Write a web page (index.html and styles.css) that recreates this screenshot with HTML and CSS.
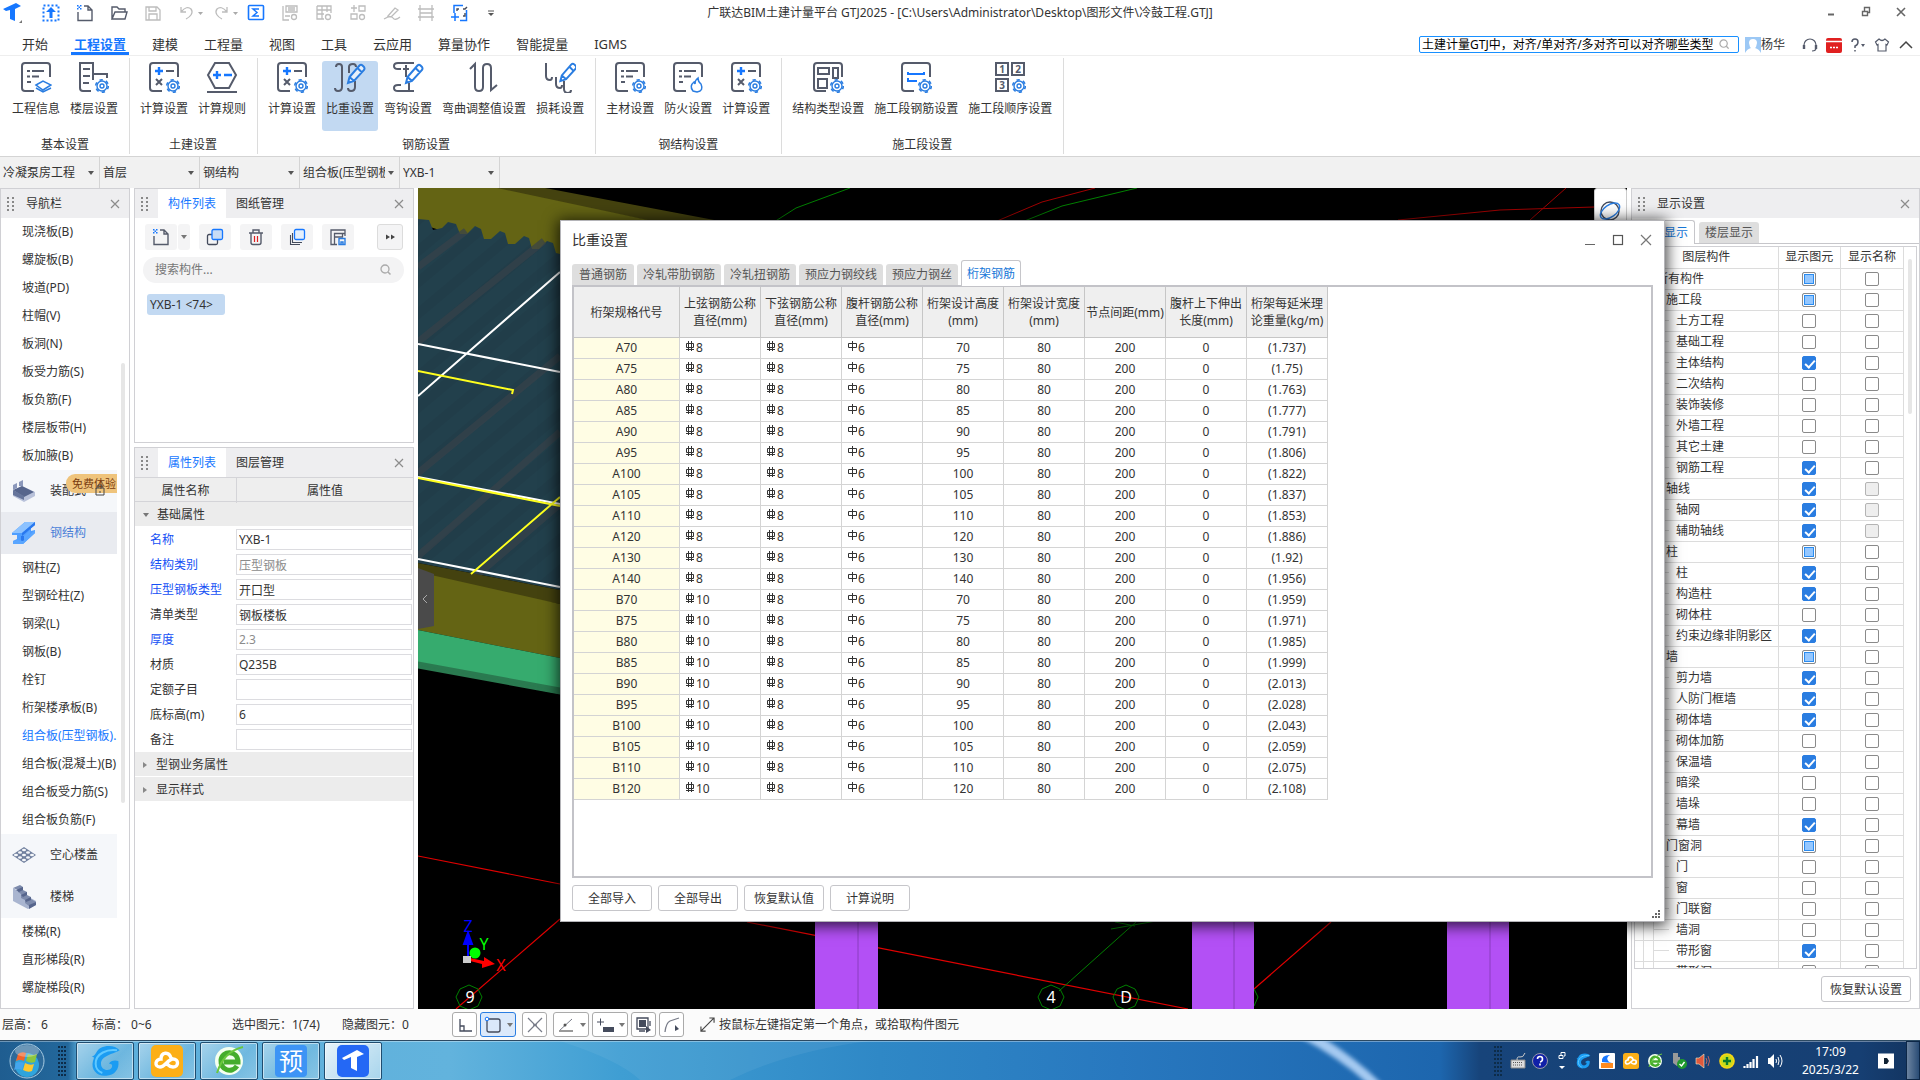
FILE: index.html
```html
<!DOCTYPE html>
<html lang="zh-CN">
<head>
<meta charset="utf-8">
<title>广联达BIM土建计量平台 GTJ2025</title>
<link rel="stylesheet" href="styles.css">
</head>
<body>
<svg class="defs" aria-hidden="true">
  <symbol id="gear" viewBox="0 0 16 16"><g fill="none" stroke="#2a7de1"><circle cx="8" cy="8" r="5" stroke-width="1.4"/><circle cx="8" cy="8" r="6.3" stroke-width="1.6" stroke-dasharray="3.3 3.3"/><circle cx="8" cy="8" r="2" stroke-width="1.4"/></g></symbol>
  <symbol id="pencil" viewBox="0 0 20 22"><path d="M2 20l1.500-6L13.500 2.500q1.500-1.500 3 0l1.500 1.500q1 1.500 0 3L8 18zM11.500 5l4.500 4.500M3.500 14L8 18" fill="#fff" fill-opacity=".6" stroke="#2a7de1" stroke-width="2"/></symbol>
  <symbol id="doc-open" viewBox="0 0 32 32"><path d="M14 30H5q-3 0-3-3V5q0-3 3-3h22q3 0 3 3v11" fill="none" stroke="#555b6b" stroke-width="2"/></symbol>
  <symbol id="doc-lines" viewBox="0 0 32 32"><use href="#doc-open"/><path d="M7 10h3M12 10h12M7 15.500h3M12 15.500h7M7 21h4" stroke="#555b6b" stroke-width="2"/></symbol>
  <symbol id="calc" viewBox="0 0 32 32"><use href="#doc-open"/><path d="M7 10h8M11 6v8" stroke="#1677ff" stroke-width="2.400"/><path d="M18 10h8M8 18l6 6M14 18l-6 6" stroke="#555b6b" stroke-width="2"/><use href="#gear" x="17" y="17" width="16" height="16"/></symbol>
  <symbol id="hrb" viewBox="0 0 10 10"><path d="M1.500 2.500h7v4h-7zM3.500 0v10M6.500 0v10M1 8.500h8" fill="none" stroke="#333"/></symbol>
  <symbol id="hpb" viewBox="0 0 10 10"><path d="M1.500 2.500h8v4h-8zM5.500 0v10" fill="none" stroke="#333"/></symbol>
  <symbol id="close" viewBox="0 0 10 10"><path d="M1 1l8 8M9 1L1 9" stroke="#8c8c8c" stroke-width="1.200"/></symbol>
  <symbol id="lens" viewBox="0 0 12 12"><circle cx="5" cy="5" r="4" fill="none" stroke="#aaa" stroke-width="1.300"/><path d="M8 8l2.500 2.500" stroke="#aaa" stroke-width="1.500"/></symbol>
  <symbol id="newdoc" viewBox="0 0 18 18"><path d="M2 8v8.500h14V6l-4-4H8M12 2v4h4" fill="none" stroke="#555b6b" stroke-width="1.400"/><path d="M1 1h1.500v1.500H1zM4 1h1.500v1.500H4zM2.500 2.500H4V4H2.500zM1 4h1.500v1.500H1zM4 4h1.500v1.500H4z" fill="#1677ff"/></symbol>
  <symbol id="glodon" viewBox="0 0 24 24"><path d="M23 4C20 0 13 0 9 2 5 4 6 7 2 9c2 0 2 0 1 3-2 7 4 12 10 11 6 0 10-5 9-11-3-1-6 0-7 2 2 0 3 1 2 3-2 3-8 2-8-3 0-6 9-7 14-10z" fill="#1b9cf2"/><path d="M21 4C14 3 5 6 5 14c0 3 2 6 5 7" fill="none" stroke="#5fc8ff" stroke-width="1.500"/></symbol>
  <symbol id="cloud" viewBox="0 0 32 32"><rect width="32" height="32" rx="5" fill="#fcaf17"/><path d="M20 13c-2-7-10-6-10 1-6 0-7 8-1 8 5 0 8-8 13-8 6 0 6 8 0 8-3 0-4-1-6-3" fill="none" stroke="#fff" stroke-width="3.400" stroke-linecap="round"/></symbol>
  <symbol id="ie" viewBox="0 0 32 32"><circle cx="16" cy="16" r="14" fill="#f4fff0"/><path d="M24 21c-5 8-17 4-16-6C9 5 25 5 25 17H11" fill="none" stroke="#45ad2d" stroke-width="5"/><path d="M4 28C8 15 17 5 30 2" fill="none" stroke="#69c83d" stroke-width="2"/></symbol>
</svg>

<header class="titlebar">
  <div class="quick">
    <svg class="logo" viewBox="0 0 22 22"><path d="M1 7L14 1l5 3-6 3v12l-5-2V8l-4 1z" fill="#1677ff"/><path d="M17 21h3v-3z" fill="#777"/></svg>
    <svg viewBox="0 0 18 18"><rect x="1.500" y="1.500" width="15" height="15" fill="none" stroke="#1677ff" stroke-width="2" stroke-dasharray="2 2"/><path d="M9 3l5 5h-3.500v6h-3V8H4z" fill="#1677ff"/></svg>
    <svg viewBox="0 0 18 18"><use href="#newdoc"/></svg>
    <svg viewBox="0 0 18 18"><path d="M2 15V3h5l2 2h6v3M2 15l3-7h12l-2 7z" fill="none" stroke="#555b6b" stroke-width="1.400"/></svg>
    <svg class="dim" viewBox="0 0 18 18"><path d="M2 3h11l3 3v10H2zM5 3v4h7V3M5 16v-6h8v6"/></svg>
    <svg class="dim wide" viewBox="0 0 28 18"><path d="M3 3v5h5M3 8q6-7 10-3c3 4-1 8-5 10"/><path class="fill" d="M20 8h5l-2.500 3z"/></svg>
    <svg class="dim wide" viewBox="0 0 28 18"><path d="M14 3v5H9M14 8Q8 1 4 5c-3 4 1 8 5 10"/><path class="fill" d="M20 8h5l-2.500 3z"/></svg>
    <svg viewBox="0 0 18 18"><rect x="1.500" y="1.500" width="15" height="14" rx="1" fill="none" stroke="#1677ff" stroke-width="1.600"/><path d="M12 5H6l4 3.500L6 12h6" fill="none" stroke="#1677ff" stroke-width="1.500"/></svg>
    <svg class="dim" viewBox="0 0 18 18"><path d="M5 2h11v6H5zM7 4h7M7 6h7M2 2v14h6M4 12h5"/><circle cx="13" cy="13" r="2.500"/></svg>
    <svg class="dim" viewBox="0 0 18 18"><path d="M2 2h14v7M2 2v13h7M2 6h14M2 10h7M7 2v13M12 2v6"/><circle cx="13" cy="13" r="2.500"/></svg>
    <svg class="dim" viewBox="0 0 18 18"><path d="M2 4h6M5 1v7M10 2h6v5h-6zM2 10h6v5H2z"/><circle cx="13" cy="13" r="2.500"/></svg>
    <svg class="dim" viewBox="0 0 18 18"><path d="M5 12l7-8 3 2-7 7zM1 15q7-4 9-1t7-1"/></svg>
    <svg class="dim" viewBox="0 0 18 18"><path d="M3 1v16M15 1v16M1 5h16M1 13h16M3 9h12"/></svg>
    <svg viewBox="0 0 18 18"><path d="M3 9V1.500h9M15.500 6v10.500H9" fill="none" stroke="#1677ff" stroke-width="1.500"/><path d="M0 13h8M4 9v8" stroke="#1677ff" stroke-width="1.500"/><path d="M6 7V5h2M12 5h2l2-2M14 9v3h-2" fill="none" stroke="#444b5c" stroke-width="1.400"/></svg>
    <svg viewBox="0 0 18 18"><path d="M3 7h6" stroke="#555"/><path d="M3 9h6l-3 3z" fill="#555"/></svg>
  </div>
  <h1>广联达BIM土建计量平台 GTJ2025 - [C:\Users\Administrator\Desktop\图形文件\冷鼓工程.GTJ]</h1>
  <div class="winbtns">
    <button aria-label="最小化"><svg viewBox="0 0 12 12"><path d="M3 8.500h6" stroke="#666" stroke-width="2"/></svg></button>
    <button aria-label="还原"><svg viewBox="0 0 12 12"><path d="M2.500 5.500h5v4h-5zM4.500 5V1.500h5v5H8" fill="none" stroke="#666" stroke-width="1.400"/></svg></button>
    <button aria-label="关闭"><svg viewBox="0 0 12 12"><path d="M2 2l8 8M10 2l-8 8" stroke="#666" stroke-width="1.600"/></svg></button>
  </div>
</header>

<div class="menubar">
  <nav>
    <a href="#">开始</a><a href="#" class="on">工程设置</a><a href="#">建模</a><a href="#">工程量</a><a href="#">视图</a><a href="#">工具</a><a href="#">云应用</a><a href="#">算量协作</a><a href="#">智能提量</a><a href="#">IGMS</a>
  </nav>
  <div class="help-area">
    <label class="ask"><input type="text" aria-label="搜索" value="土建计量GTJ中，对齐/单对齐/多对齐可以对齐哪些类型"><svg viewBox="0 0 12 12"><use href="#lens"/></svg></label>
    <svg class="avatar" viewBox="0 0 16 16"><rect width="16" height="16" fill="#9cc8f5"/><path d="M4 6q0-4 4-4t4 4l-1 4-1 1q4 1 6 5H0q2-4 6-5l-1-1z" fill="#fff"/></svg>
    <span class="user">杨华</span>
    <svg class="tool" viewBox="0 0 16 16"><path d="M2 10V8a6 6 0 0112 0v3q0 3-4 3" fill="none" stroke="#555b6b" stroke-width="1.200"/><path d="M2 8v4M14 8v4" stroke="#555b6b" stroke-width="2.400"/></svg>
    <svg class="tool" viewBox="0 0 16 16"><rect y="1" width="16" height="15" rx="2" fill="#e02020"/><path d="M0 4.500h16M4 10.500h2M7 10.500h2M10 10.500h2" stroke="#fff" stroke-width="1.400"/></svg>
    <svg class="tool" viewBox="0 0 16 16"><path d="M2 5q0-3 3-3t3 3-3 4v2M5 13v1.500" fill="none" stroke="#555b6b" stroke-width="1.500"/><path d="M11 7h4l-2 3z" fill="#555b6b"/></svg>
    <svg class="tool" viewBox="0 0 16 16"><path d="M5 2L1.500 5 3 8l1-.5V14h8V7.500l1 .5 1.500-3L11 2q-3 3-6 0z" fill="none" stroke="#555b6b" stroke-width="1.200"/></svg>
    <svg class="tool" viewBox="0 0 16 16"><path d="M2 11l6-6 6 6" fill="none" stroke="#444" stroke-width="1.500"/></svg>
  </div>
</div>

<section class="ribbon">
  <div class="group first">
    <div class="cmds">
      <button><svg viewBox="0 0 32 32"><use href="#doc-lines"/><path d="M16 24l7-4 8 4-8 5zM16 27l7 4 8-4" fill="#fff" stroke="#2a7de1" stroke-width="1.500"/></svg>工程信息</button>
      <button><svg viewBox="0 0 32 32"><path d="M14 30H5q-3 0-3-3V2h13v28M15 13h14v4M5 8h7M5 15h7M5 22h6" fill="none" stroke="#555b6b" stroke-width="2"/><rect x="13" y="19" width="6" height="13" fill="#fff"/><use href="#gear" x="16" y="17" width="16" height="16"/></svg>楼层设置</button>
    </div><h2>基本设置</h2>
  </div>
  <div class="group">
    <div class="cmds">
      <button><svg viewBox="0 0 32 32"><use href="#calc"/></svg>计算设置</button>
      <button><svg viewBox="0 0 32 32"><path d="M9 2h14l7 12-7 13H9L2 14zM1 31h30" fill="none" stroke="#555b6b" stroke-width="2"/><path d="M7 14h8M11 10v8M18 14h8" stroke="#1677ff" stroke-width="2.400"/></svg>计算规则</button>
    </div><h2>土建设置</h2>
  </div>
  <div class="group">
    <div class="cmds">
      <button><svg viewBox="0 0 32 32"><use href="#calc"/></svg>计算设置</button>
      <button class="on"><svg viewBox="0 0 32 32"><path d="M2 6q0-3 3-3t3 3v20q0 4-4 4-3 0-3-3M15 12V6q0-3 4-3 3 0 3 3M21 20v6q0 4-4 4-3 0-3-3" fill="none" stroke="#555b6b" stroke-width="2"/><use href="#pencil" x="12" y="2" width="20" height="22"/></svg>比重设置</button>
      <button><svg viewBox="0 0 32 32"><path d="M22 2H6q-4 0-4 3t4 3h3M14 4v12M11 8h6M22 30H6q-4 0-4-3t4-3h3M17 22v7" fill="none" stroke="#555b6b" stroke-width="2"/><use href="#pencil" x="12" y="2" width="20" height="22"/></svg>弯钩设置</button>
      <button><svg viewBox="0 0 32 32"><path d="M2 8l5-5v23q0 4 4 4t4-4V7q0-4 4-4t4 4v22l6-5" fill="none" stroke="#555b6b" stroke-width="2"/></svg>弯曲调整值设置</button>
      <button><svg viewBox="0 0 32 32"><path d="M2 2v13q0 4 4 4 2 0 2-3M12 16v7q0 4 4 4 2 0 2-3M20 20v8q0 4 4 4 3 0 3-3" fill="none" stroke="#555b6b" stroke-width="2"/><use href="#pencil" x="14" y="1" width="20" height="21"/></svg>损耗设置</button>
    </div><h2>钢筋设置</h2>
  </div>
  <div class="group">
    <div class="cmds">
      <button><svg viewBox="0 0 32 32"><use href="#doc-lines"/><use href="#gear" x="17" y="17" width="16" height="16"/></svg>主材设置</button>
      <button><svg viewBox="0 0 32 32"><use href="#doc-lines"/><path d="M21 30q-4-5 1-9l1 2q0-4 3-6 0 4 3 6 3 7-4 8z" fill="#fff" stroke="#2a7de1" stroke-width="1.500"/></svg>防火设置</button>
      <button><svg viewBox="0 0 32 32"><use href="#calc"/></svg>计算设置</button>
    </div><h2>钢结构设置</h2>
  </div>
  <div class="group">
    <div class="cmds">
      <button><svg viewBox="0 0 32 32"><use href="#doc-open"/><path d="M6 7h11v6H6zM21 7h5v10h-5zM6 18h9v9H6z" fill="none" stroke="#555b6b" stroke-width="2"/><use href="#gear" x="17" y="17" width="16" height="16"/></svg>结构类型设置</button>
      <button><svg viewBox="0 0 32 32"><use href="#doc-open"/><path d="M8 11v2h16v-2M8 17v3h9" fill="none" stroke="#1677ff" stroke-width="2"/><use href="#gear" x="17" y="17" width="16" height="16"/></svg>施工段钢筋设置</button>
      <button><svg viewBox="0 0 32 32"><path d="M2 2h12v12H2zM18 2h12v12H18zM2 18h12v12H2z" fill="none" stroke="#555b6b" stroke-width="2"/><g font-family="Noto Sans" font-size="10" font-weight="700" text-anchor="middle" fill="#555b6b"><text x="8" y="12">1</text><text x="24" y="12">2</text><text x="8" y="28">3</text></g><use href="#gear" x="17" y="17" width="16" height="16"/></svg>施工段顺序设置</button>
    </div><h2>施工段设置</h2>
  </div>
</section>

<div class="pickers">
  <div><select aria-label="工程"><option>冷凝泵房工程</option></select></div>
  <div><select aria-label="楼层"><option>首层</option></select></div>
  <div><select aria-label="专业"><option>钢结构</option></select></div>
  <div><select aria-label="构件类型"><option>组合板(压型钢板)</option></select></div>
  <div><select aria-label="构件"><option>YXB-1</option></select></div>
</div>

<main>
  <aside class="panel nav">
    <div class="phead"><i class="grip"></i><b>导航栏</b><svg class="x" viewBox="0 0 10 10"><use href="#close"/></svg></div>
    <div class="navlist">
      <a href="#">现浇板(B)</a><a href="#">螺旋板(B)</a><a href="#">坡道(PD)</a><a href="#">柱帽(V)</a><a href="#">板洞(N)</a><a href="#">板受力筋(S)</a><a href="#">板负筋(F)</a><a href="#">楼层板带(H)</a><a href="#">板加腋(B)</a>
      <a href="#" class="cat"><svg viewBox="0 0 24 24"><path d="M1 12l9-5 13 6v4l-11 6L1 17z" fill="#b9c2da"/><path d="M1 11l9-4 12 6-10 5z" fill="#56658c"/><path d="M1 11v5l11 5v-4z" fill="#66759b"/><path d="M1 6l4-2v5l-4 2zM7 3l4-2v6H7z" fill="#8b98bb"/></svg>装配式<svg class="lock" viewBox="0 0 10 12"><path d="M1 4h8v7H1zM3 4V1h4v3M5 7v2" fill="none" stroke="#444"/></svg><em>免费体验</em></a>
      <a href="#" class="cat on"><svg viewBox="0 0 24 24"><path d="M0 12L13 1h10v3l-4 3v3l4-1v3L11 23H1v-3l4-2v-4H0z" fill="#4d9dff"/><path d="M0 12L13 1h10L10 12z" fill="#8cc2ff"/><path d="M10 12L23 1v3L10 15zM9 15h3v5H9z" fill="#2a78ee"/><path d="M12 15l6-6v4l-6 6zM1 20l5-1 5 1 12-11v3L11 23H1z" fill="#5aa6ff"/></svg>钢结构</a>
      <a href="#">钢柱(Z)</a><a href="#">型钢砼柱(Z)</a><a href="#">钢梁(L)</a><a href="#">钢板(B)</a><a href="#">栓钉</a><a href="#">桁架楼承板(B)</a><a href="#" class="cur">组合板(压型钢板)...</a><a href="#">组合板(混凝土)(B)</a><a href="#">组合板受力筋(S)</a><a href="#">组合板负筋(F)</a>
      <a href="#" class="cat"><svg viewBox="0 0 24 24"><path d="M0 12l12-8 12 8-12 8z" fill="#71809f"/><g fill="#f5f7fa"><ellipse cx="12" cy="7" rx="2" ry="1.200"/><ellipse cx="8" cy="9.500" rx="2" ry="1.200"/><ellipse cx="16" cy="9.500" rx="2" ry="1.200"/><ellipse cx="4" cy="12" rx="2" ry="1.200"/><ellipse cx="12" cy="12" rx="2" ry="1.200"/><ellipse cx="20" cy="12" rx="2" ry="1.200"/><ellipse cx="8" cy="14.500" rx="2" ry="1.200"/><ellipse cx="16" cy="14.500" rx="2" ry="1.200"/><ellipse cx="12" cy="17" rx="2" ry="1.200"/></g></svg>空心楼盖</a>
      <a href="#" class="cat"><svg viewBox="0 0 24 24"><path d="M1 3v13l15 8 8-4v-4z" fill="#a9b5d0"/><path d="M1 3l7-3 3 2v3l4 2v3l4 2v2l5 3-7 4-4-3v-3l-4-2V9L6 7V5z" fill="#7d8bac"/><path d="M4 5l7-3v3L7 7zM9 10l6-3v3l-4 2zM13 15l6-3v3l-5 2zM17 20l7-3v3l-7 4z" fill="#56658c"/></svg>楼梯</a>
      <a href="#">楼梯(R)</a><a href="#">直形梯段(R)</a><a href="#">螺旋梯段(R)</a>
    </div>
    <i class="thumb"></i>
  </aside>

  <div class="stack">
    <section class="panel comps">
      <div class="phead tabs"><i class="grip"></i><button class="on">构件列表</button><button>图纸管理</button><svg class="x" viewBox="0 0 10 10"><use href="#close"/></svg></div>
      <div class="tools">
        <div class="split"><button aria-label="新建"><svg viewBox="0 0 18 18"><use href="#newdoc"/></svg></button><button class="mini" aria-label="更多新建"><i class="caret"></i></button></div>
        <button aria-label="复制"><svg viewBox="0 0 18 18"><rect x="1.500" y="6.500" width="10" height="10" rx="1.500" fill="none" stroke="#444b5c" stroke-width="1.300"/><rect x="6" y="1.500" width="10.500" height="10" rx="1.500" fill="#c8dcf5" stroke="#1677ff" stroke-width="1.300"/></svg></button>
        <button aria-label="删除"><svg viewBox="0 0 18 18"><path d="M2 5h14M6 5V2h6v3M4 5v9.500q0 2 2 2h6q2 0 2-2V5" fill="none" stroke="#555b6b" stroke-width="1.400"/><path d="M7.500 8v6M10.500 8v6" stroke="#e02020" stroke-width="1.200"/></svg></button>
        <button aria-label="层间复制"><svg viewBox="0 0 18 18"><path d="M2.500 7v9.500H12M4.500 5v9.500H14" fill="none" stroke="#444b5c" stroke-width="1.100"/><rect x="6.500" y="1.500" width="10" height="10" rx="1.500" fill="#e4effc" stroke="#1677ff" stroke-width="1.300"/></svg></button>
        <button aria-label="存档"><svg viewBox="0 0 18 18"><path d="M8 16.500H2V2h14v6M5.500 16V5.500h10M5.500 9h8V5" fill="none" stroke="#555b6b" stroke-width="1.300"/><path d="M10 10.500h6v6h-6zM12 16v-2h2v2" fill="none" stroke="#2a7de1" stroke-width="1.400"/></svg></button>
        <button class="more" aria-label="更多"><svg viewBox="0 0 18 18"><path d="M5 6.500v5L9 9zM10 6.500v5L14 9z" fill="#444"/></svg></button>
      </div>
      <label class="find"><input type="text" placeholder="搜索构件..." aria-label="搜索构件"><svg viewBox="0 0 12 12"><use href="#lens"/></svg></label>
      <button class="chip">YXB-1 &lt;74&gt;</button>
    </section>
    <section class="panel props">
      <div class="phead tabs"><i class="grip"></i><button class="on">属性列表</button><button>图层管理</button><svg class="x" viewBox="0 0 10 10"><use href="#close"/></svg></div>
      <div class="pcols"><span>属性名称</span><span>属性值</span></div>
      <div class="pgroup open"><i class="caret"></i>基础属性</div>
      <div class="prow key"><label for="p1">名称</label><input id="p1" value="YXB-1"></div>
      <div class="prow key"><label for="p2">结构类别</label><input id="p2" class="ro" value="压型钢板" readonly></div>
      <div class="prow key"><label for="p3">压型钢板类型</label><input id="p3" value="开口型"></div>
      <div class="prow"><label for="p4">清单类型</label><input id="p4" value="钢板楼板"></div>
      <div class="prow key"><label for="p5">厚度</label><input id="p5" class="ro" value="2.3" readonly></div>
      <div class="prow"><label for="p6">材质</label><input id="p6" value="Q235B"></div>
      <div class="prow"><label for="p7">定额子目</label><input id="p7"></div>
      <div class="prow"><label for="p8">底标高(m)</label><input id="p8" value="6"></div>
      <div class="prow"><label for="p9">备注</label><input id="p9"></div>
      <div class="pgroup"><i class="caret side"></i>型钢业务属性</div>
      <div class="pgroup"><i class="caret side"></i>显示样式</div>
    </section>
  </div>

  <div class="scene">
    <svg class="model" viewBox="418 188 1209 821" preserveAspectRatio="xMinYMin slice">
      <defs><pattern id="ribs" width="24" height="24" patternUnits="userSpaceOnUse" patternTransform="rotate(50)"><rect width="24" height="24" fill="#22404c"/><rect width="10" height="24" fill="#213d49"/></pattern></defs>
      <rect x="418" y="188" width="1209" height="821" fill="#000"/>
      <path d="M490 188h55l185 35-30 8z" fill="#44420f"/>
      <path d="M418 188h79l165 35-60 60-184-60z" fill="#646414"/>
      <path d="M418 219L429 220 433 230 442 228 448 222 456 224 460 234 467 234 475 226 481 229 484 239 491 239 500 231 505 233 508 244 515 244 524 236 529 238 532 249 539 249 547 241 553 243 556 253 560 254V590L418 563z" fill="url(#ribs)"/>
      <path d="M418 267l48-36M418 342l126-101M418 473l142-117M418 556l142-124M462 588l98-84" stroke="#38424a" stroke-opacity=".7" stroke-width="7"/>
      <path d="M418 563l142 27v14l-142-26z" fill="#44420f"/>
      <path d="M418 572l142 32v54l-142-28z" fill="#646414"/>
      <path d="M418 630l142 28v36l-142-28z" fill="#36ab6e"/>
      <path d="M418 663l142 26v4l-142-26z" fill="#2a7a50" stroke="#2a7a50" stroke-width="3"/>
      <g fill="none" stroke="#fff" stroke-width="2"><path d="M418 396l142-124M418 344l142 28M418 477l142 27M418 559l142 28"/></g>
      <g fill="none" stroke="#ffff1e" stroke-width="2"><path d="M418 371l95 19-1 4M418 478l142 28M471 574l89-77"/></g>
      <path d="M418 568l16 6v52l-16 3z" fill="#4a4a4a"/><path d="M427 595l-4 4 4 4" fill="none" stroke="#aaa"/>
      <g fill="none" stroke="#e00000" stroke-width="1.200"><path d="M418 856l142 28M747 922l441 87M456 1009l104-90M1254 989l77-67"/></g>
      <g fill="none" stroke="#a00000"><path d="M990 224l52-22 53-14M1398 220l102-10 94-3M1530 220l36-32"/></g>
      <g fill="none" stroke="#008000"><path d="M774 222l22-14 54-20M1022 222l40-16 75-18M1059 991l77-69M1111 929l45-8M1115 922l20 4"/>
        <path id="bubble" d="M469 985l9 4 4 8-4 9-9 4-9-4-4-9 4-8z"/><use href="#bubble" x="582"/><use href="#bubble" x="657"/><use href="#bubble" x="776"/></g>
      <g fill="#b350f5"><path d="M815 900h63v109h-63zM1192 900h62v109h-62zM1447 900h62v109h-62z"/></g>
      <path d="M858 900v109M1234 900v109M1490 900v109" stroke="#8a3cc0"/>
      <g font-family="Noto Sans" font-size="16" fill="#fff" text-anchor="middle"><text x="470" y="1003">9</text><text x="1051" y="1003">4</text><text x="1126" y="1003">D</text></g>
      <path d="M468 960v-16h-4l4-11 4 11h-4z" fill="#00f" stroke="#00f" stroke-width="2"/><circle cx="475" cy="953" r="5.500" fill="#0f0"/><path d="M470 958l14 3v-4l11 7-13 4v-4l-12-3z" fill="red"/><rect x="463" y="956" width="8" height="7" fill="#ccc"/>
      <g font-family="Noto Sans" font-size="16" text-anchor="middle"><text x="468" y="932" fill="#00f">Z</text><text x="484" y="950" fill="#0f0">Y</text><text x="501" y="971" fill="red">X</text></g>
    </svg>
    <div class="orbit"><svg viewBox="0 0 24 24"><circle cx="12" cy="12" r="9" fill="none" stroke="#444b5c" stroke-width="1.400"/><ellipse cx="12" cy="12" rx="11" ry="6" transform="rotate(-35 12 12)" fill="none" stroke="#2a7de1" stroke-width="1.400"/></svg></div>
  </div>

  <aside class="panel layers">
    <div class="phead"><i class="grip"></i><b>显示设置</b><svg class="x" viewBox="0 0 10 10"><use href="#close"/></svg></div>
    <div class="ltabs"><button class="on">图元显示</button><button>楼层显示</button></div>
    <div class="lbox">
      <table class="ltable">
        <thead><tr><th>图层构件</th><th>显示图元</th><th>显示名称</th></tr></thead>
        <tbody id="layers"></tbody>
      </table>
      <i class="thumb"></i>
    </div>
    <div class="lfoot"><button class="btn">恢复默认设置</button></div>
  </aside>

  <section class="dialog" role="dialog" aria-label="比重设置">
    <div class="dtitle"><h2>比重设置</h2>
      <button aria-label="最小化"><svg viewBox="0 0 12 12"><path d="M1 10.500h10" stroke="#666"/></svg></button>
      <button aria-label="最大化"><svg viewBox="0 0 12 12"><rect x="1.500" y="1.500" width="9" height="9" fill="none" stroke="#555" stroke-width="1.200"/></svg></button>
      <button aria-label="关闭"><svg viewBox="0 0 12 12"><path d="M1 1l10 10M11 1L1 11" stroke="#777" stroke-width="1.200"/></svg></button>
    </div>
    <div class="dtabs"><button>普通钢筋</button><button>冷轧带肋钢筋</button><button>冷轧扭钢筋</button><button>预应力钢绞线</button><button>预应力钢丝</button><button class="on">桁架钢筋</button></div>
    <div class="dbody">
      <table class="bars">
        <thead><tr><th class="code">桁架规格代号</th><th>上弦钢筋公称<br>直径(mm)</th><th>下弦钢筋公称<br>直径(mm)</th><th>腹杆钢筋公称<br>直径(mm)</th><th>桁架设计高度<br>(mm)</th><th>桁架设计宽度<br>(mm)</th><th>节点间距(mm)</th><th>腹杆上下伸出<br>长度(mm)</th><th>桁架每延米理<br>论重量(kg/m)</th></tr></thead>
        <tbody id="bars"></tbody>
      </table>
    </div>
    <div class="dfoot"><button class="btn">全部导入</button><button class="btn">全部导出</button><button class="btn">恢复默认值</button><button class="btn">计算说明</button>
      <svg class="size" viewBox="0 0 9 9"><path d="M6 0h2v2H6zM3 3h2v2H3zM6 3h2v2H6zM0 6h2v2H0zM3 6h2v2H3zM6 6h2v2H6z" fill="#666"/></svg></div>
  </section>
</main>

<footer class="status">
  <div class="facts"><span>层高： 6</span><span>标高： 0~6</span><span>选中图元：1(74)</span><span>隐藏图元：0</span></div>
  <div class="snap">
    <button aria-label="正交"><svg viewBox="0 0 18 18"><path d="M4 3v12h12M4 10h4v5" fill="none" stroke="#444b5c" stroke-width="1.300"/></svg></button>
    <button class="drop on" aria-label="选择"><svg viewBox="0 0 18 18"><rect x="3" y="3" width="13" height="13" rx="2" fill="none" stroke="#444b5c" stroke-width="1.300"/><circle cx="3" cy="3" r="1.800" fill="#fff" stroke="#1677ff"/></svg><i class="caret"></i></button>
    <button class="apart" aria-label="交点"><svg viewBox="0 0 18 18"><path d="M2 2l14 14M16 2L2 16M7 9h4" fill="none" stroke="#777b88" stroke-width="1.200"/></svg></button>
    <button class="drop apart" aria-label="角度"><svg viewBox="0 0 18 18"><path d="M2 15L15 3" stroke="#777b88"/><path d="M2 15h14" stroke="#999" stroke-width="2"/><circle cx="8" cy="9" r="1.500" fill="#555"/></svg><i class="caret"></i></button>
    <button class="drop" aria-label="偏移"><svg viewBox="0 0 18 18"><path d="M1 6h7M4.500 2.500v7" stroke="#444b5c"/><rect x="7" y="11" width="11" height="5" fill="#444b5c"/></svg><i class="caret"></i></button>
    <button aria-label="选中"><svg viewBox="0 0 18 18"><path d="M2 2h11v11H2zM15 5v5M4 15h6" fill="none" stroke="#444b5c" stroke-width="1.300"/><rect x="4" y="4" width="7" height="7" fill="#444b5c"/><path d="M11 10l5 4-5 3z" fill="#444b5c"/></svg></button>
    <button aria-label="折线"><svg viewBox="0 0 18 18"><path d="M2 16Q3 7 7 5l9-3" fill="none" stroke="#777b88" stroke-width="1.300"/><path d="M12 9l4 4-4 2z" fill="#444b5c"/></svg></button>
  </div>
  <p><svg viewBox="0 0 16 16"><path d="M1 15L15 1M10 1h5v5M1 10v5h5" fill="none" stroke="#444" stroke-width="1.200"/></svg>按鼠标左键指定第一个角点，或拾取构件图元</p>
</footer>

<div class="taskbar">
  <svg class="swoosh" viewBox="0 0 1920 40" preserveAspectRatio="none"><defs><filter id="soft"><feGaussianBlur stdDeviation="2"/></filter></defs><path d="M1300-4h22q34 22 60 48h-14q-28-26-68-48z" fill="#b4d4f8" opacity=".9" filter="url(#soft)"/><path d="M560 0q60 20 80 40h90q60-30 140-40z" fill="#fff" opacity=".06"/></svg>
  <button class="orb" aria-label="开始"><svg viewBox="0 0 36 36"><circle cx="18" cy="18" r="17" fill="#2d6a9a" stroke="#a7cbe2"/><circle cx="18" cy="22" r="12" fill="#2fa4dd"/><path d="M9 11q4-3 8-1l-2 8q-4-2-8 0z" fill="#f0642a"/><path d="M19 11q4 2 9 0l-2 8q-4 2-9-1z" fill="#8cc63f"/><path d="M7 20q4-2 8 0l-2 7q-4-2-8 0z" fill="#45a6ee"/><path d="M16 20q5 3 9 1l-2 7q-4 2-9-1z" fill="#fdc72f"/><ellipse cx="18" cy="8" rx="12" ry="6" fill="#fff" opacity=".3"/></svg></button>
  <i class="dots"></i>
  <div class="apps">
    <button aria-label="广联达"><svg viewBox="0 0 24 24"><use href="#glodon"/></svg></button>
    <button aria-label="云"><svg viewBox="0 0 32 32"><use href="#cloud"/></svg></button>
    <button aria-label="浏览器"><svg viewBox="0 0 32 32"><use href="#ie"/></svg></button>
    <button class="pre"><span>预</span></button>
    <button class="on" aria-label="土建计量"><svg viewBox="0 0 32 32"><rect width="32" height="32" rx="5" fill="#2468f5"/><path d="M5 13L20 5l7 4-7 3v14l-6-3V12l-7 3z" fill="#fff"/></svg></button>
  </div>
  <div class="tray">
    <i class="dots"></i>
    <svg class="kbd" viewBox="0 0 16 16"><path d="M1 7h14v8H1z" fill="#ddd" stroke="#888"/><path d="M3 9.500h10M3 12h10" stroke="#555" stroke-dasharray="1 1"/><path d="M7 7q0-4 3-3t5-4" fill="none" stroke="#ccc"/></svg>
    <svg viewBox="0 0 16 16"><circle cx="8" cy="8" r="7.500" fill="#1020a8" stroke="#99a"/><path d="M5.500 6q0-2.500 2.500-2.500T10.500 6 8 9M8 10.500v2" fill="none" stroke="#fff" stroke-width="1.600"/></svg>
    <svg class="pair" viewBox="0 0 8 22"><path d="M1 5.500h4v3H1zM3 5V2.500h4v3.500H6" fill="none" stroke="#fff"/><path d="M1 16h6l-3 3z" fill="#fff"/></svg>
    <svg viewBox="0 0 24 24"><use href="#glodon"/></svg>
    <svg viewBox="0 0 16 16"><rect width="16" height="16" rx="1" fill="#fff"/><path d="M2 10h12v5H2z" fill="#ff8a1e"/><path d="M3 9q-1-7 8-7-5 3-1 7l3 1" fill="#1677ff"/></svg>
    <svg viewBox="0 0 32 32"><use href="#cloud"/></svg>
    <svg viewBox="0 0 32 32"><use href="#ie"/></svg>
    <svg viewBox="0 0 16 16"><path d="M2 0h5v4h2v6l-3 3-4-3V4z" fill="#999"/><circle cx="11" cy="11" r="5" fill="#1f9a2e"/><path d="M8.500 11l2 2 3-4" fill="none" stroke="#fff" stroke-width="1.400"/></svg>
    <svg viewBox="0 0 16 16"><path d="M1 5h3l5-4v14l-5-4H1z" fill="#e0593c" stroke="#eec" stroke-width=".6"/><path d="M11 5q2 3 0 6M13 3q3 5 0 10" fill="none" stroke="#b66"/></svg>
    <svg viewBox="0 0 16 16"><circle cx="8" cy="8" r="7.800" fill="#f5d514"/><circle cx="8" cy="8" r="6" fill="#c9dc1c"/><path d="M8 4v8M4 8h8" stroke="#0c7a2c" stroke-width="2.400"/></svg>
    <svg viewBox="0 0 16 16"><path d="M1.500 13v2M4.500 11v4M7.500 9v6M10.500 6v9M14 3v12" stroke="#fff" stroke-width="2.200"/></svg>
    <svg viewBox="0 0 16 16"><path d="M1 5h2l4-4v14l-4-4H1z" fill="#fff"/><path d="M9 6q1 2 0 4M11 4q2 4 0 8M13 2q4 6 0 12" fill="none" stroke="#fff"/></svg>
    <time><span>17:09</span><span>2025/3/22</span></time>
    <svg viewBox="0 0 16 16"><rect width="16" height="15" y=".5" fill="#fff"/><path d="M6 5h3l2 3-2 3H6z" fill="#123"/></svg>
    <button class="peek" aria-label="显示桌面"></button>
  </div>
</div>
<script src="tables.js"></script>
</body>
</html>
```

FILE: styles.css
```css
* { box-sizing: border-box; }
body { margin: 0; height: 100vh; display: flex; flex-direction: column; overflow: hidden; background: #fff; color: #333; font: 12px/18px "Noto Sans", "Noto Sans CJK SC", sans-serif; }
button, input, select { font: inherit; color: inherit; margin: 0; }
button { border: 0; background: none; padding: 0; white-space: nowrap; }
input { border: 0; outline: 0; min-width: 0; background: none; padding: 0; }
a { color: inherit; text-decoration: none; }
h1, h2, p { margin: 0; font-size: 12px; font-weight: 400; }
svg { display: block; flex: none; }
i, em, b { font-style: normal; font-weight: 400; }
.defs { position: absolute; width: 0; height: 0; }
.caret { width: 0; height: 0; border: 3px solid transparent; border-top: 4px solid #777; border-bottom: 0; flex: none; }
.caret.side { border: 3px solid transparent; border-left: 4px solid #888; border-right: 0; }

.titlebar { display: grid; grid-template-columns: 1fr auto 1fr; align-items: center; height: 26px; flex: none; }
.quick { display: flex; align-items: center; gap: 16px; padding-left: 2px; }
.quick svg { width: 18px; height: 18px; }
.quick .logo { width: 22px; height: 22px; margin-right: 2px; }
.quick .wide { width: 28px; margin-right: -9px; }
.quick .wide + svg:not(.wide) { margin-left: -1px; }
.dim path, .dim circle { fill: none; stroke: #bdbdbd; stroke-width: 1.3; }
.dim .fill { fill: #aaa; stroke: none; }
.winbtns { display: flex; justify-content: flex-end; gap: 23px; padding: 0 13px 3px 0; }
.winbtns svg { width: 12px; height: 12px; }

.menubar { display: flex; justify-content: space-between; height: 30px; flex: none; border-bottom: 1px solid #eee; }
.menubar nav { display: flex; gap: 20px; padding-left: 19px; font-size: 13px; }
.menubar nav a { padding: 9px 3px 0; border-bottom: 3px solid transparent; }
.menubar .on { color: #1677ff; font-weight: 700; border-color: #1677ff; }
.help-area { display: flex; align-items: center; padding: 8px 6px 0 0; }
.ask { display: flex; align-items: center; width: 320px; height: 17px; border: 1px solid #1890ff; border-radius: 2px; padding: 0 8px 0 2px; color: #000; margin-right: 6px; }
.ask input { flex: 1; height: 15px; }
.ask svg { width: 11px; height: 11px; }
.avatar { width: 16px; height: 16px; }
.user { margin-right: 17px; }
.tool { width: 16px; height: 16px; margin-right: 8px; }
.tool:last-child { margin: 0; }

.ribbon { display: flex; height: 101px; flex: none; padding: 2px 0 2px; border-bottom: 1px solid #d4d4d4; }
.group { display: flex; flex-direction: column; justify-content: space-between; padding: 3px 7px 0 6px; border-right: 1px solid #dcdcdc; }
.group.first { padding-left: 8px; }
.cmds { display: flex; gap: 2px; }
.cmds button { display: flex; flex-direction: column; align-items: center; gap: 7px; height: 70px; padding: 0 4px; border-radius: 3px; }
.cmds button.on { background: #c2d9f2; }
.cmds svg { width: 32px; height: 32px; }
.group h2 { text-align: center; }

.pickers { display: flex; height: 31px; flex: none; background: #f1f1f1; }
.pickers div { position: relative; width: 100px; border-right: 1px solid #d4d4d4; }
.pickers div::after { content: ""; position: absolute; right: 5px; top: 14px; border: 3px solid transparent; border-top: 4px solid #555; border-bottom: 0; }
.pickers select { appearance: none; width: 100%; height: 31px; border: 0; background: none; padding: 0 14px 0 3px; outline: 0; }

main { position: relative; display: flex; flex: 1; min-height: 0; gap: 4px; }
.panel { border: 1px solid #d0d0d4; background: #fff; position: relative; min-height: 0; }
.phead { display: flex; align-items: center; height: 29px; background: #eeeef0; padding-left: 6px; flex: none; }
.phead b { margin-left: 12px; }
.phead .x { width: 10px; height: 10px; margin: 0 9px 0 auto; }
.grip { width: 7px; height: 14px; background: radial-gradient(circle at 1px 1px, #888 1px, transparent 1px) 0 0 / 5px 4px; }
.thumb { position: absolute; width: 4px; border-radius: 2px; background: #e6e6e6; }

.nav { width: 130px; flex: none; overflow: hidden; }
.nav .thumb { right: 4px; top: 174px; height: 440px; }
.navlist { display: flex; flex-direction: column; width: 116px; }
.navlist a { height: 28px; line-height: 28px; padding-left: 21px; white-space: nowrap; overflow: hidden; flex: none; }
.navlist .cat { position: relative; display: flex; align-items: center; height: 42px; background: #f5f7fa; padding-left: 11px; gap: 14px; }
.navlist .cat svg { width: 24px; height: 24px; }
.navlist .cat.on { background: #e9ebf0; color: #4a7fd8; }
.navlist .cur { color: #1677ff; }
.navlist .cat .lock { position: absolute; left: 94px; top: 14px; width: 10px; height: 12px; z-index: 1; }
.navlist em { position: absolute; left: 65px; right: 0; top: 4px; height: 19px; line-height: 19px; padding-left: 6px; border-radius: 9px 0 0 9px; background: #efc47c; color: #7a3c10; font-size: 11px; }

.stack { display: flex; flex-direction: column; gap: 4px; width: 280px; flex: none; }
.comps { height: 255px; flex: none; }
.props { flex: 1; }
.tabs button { height: 29px; padding: 0 10px; }
.tabs .grip { margin-right: 10px; }
.tabs .on { background: #fff; color: #1677ff; }
.tools { display: flex; gap: 9px; padding: 6px 10px 7px 10px; }
.tools button { display: flex; align-items: center; justify-content: center; width: 32px; height: 26px; background: #f4f4f5; border-radius: 3px; }
.tools svg { width: 18px; height: 18px; }
.split { display: flex; gap: 1px; }
.tools .mini { width: 12px; }
.tools .more { width: 26px; margin-left: auto; border: 1px solid #dcdcdc; }
.find { display: flex; align-items: center; height: 26px; margin: 0 9px 0 8px; padding: 0 12px; border-radius: 13px; background: #f3f3f4; }
.find input { flex: 1; }
.find input::placeholder { color: #777; }
.find svg { width: 12px; height: 12px; }
.chip { display: block; margin: 11px 12px; height: 21px; min-width: 78px; padding: 0 3px; text-align: left; background: #c2d9f2; border-radius: 3px; }
.pcols { display: grid; grid-template-columns: 101px 1fr; height: 25px; background: #eee; border: solid #d4d4d8; border-width: 1px 0; text-align: center; line-height: 25px; }
.pcols span + span { border-left: 1px solid #d4d4d8; }
.pgroup { display: flex; align-items: center; height: 24px; margin-bottom: 1px; background: #ececec; padding: 1px 0 0 8px; gap: 8px; }
.pgroup .side { margin-right: 1px; }
.prow { display: flex; align-items: center; height: 25px; padding: 0 1px 0 15px; }
.prow label { width: 86px; }
.prow input { flex: 1; height: 21px; border: 1px solid #dcdce0; padding: 0 2px; }
.key label { color: #1450f5; }
.prow .ro { color: #8c8c8c; }

.scene { position: relative; flex: 1; min-width: 0; overflow: hidden; background: #000; }
.model { width: 100%; height: 100%; }
.orbit { position: absolute; right: 0; top: 0; width: 33px; height: 160px; padding: 10px 3px; background: #fff; border: 1px solid #ccc; border-radius: 3px; }
.orbit svg { width: 24px; height: 24px; }

.layers { width: 289px; flex: none; display: flex; flex-direction: column; }
.ltabs { display: flex; align-items: flex-end; gap: 4px; height: 26px; border-bottom: 1px solid #c6c6ca; margin-left: 1px; flex: none; }
.ltabs button, .dtabs button { height: 21px; padding: 0 6px; background: #dedede; color: #555; border-radius: 3px 3px 0 0; }
.ltabs button.on, .dtabs button.on { background: #fff; color: #1677d8; border: 1px solid #c6c6ca; border-bottom: 0; margin-bottom: -1px; }
.ltabs .on { height: 24px; }
.lbox { position: relative; flex: 1; min-height: 0; overflow: hidden; margin: 2px 2px 0; border: 1px solid #d0d0d4; }
.lbox .thumb { right: 4px; top: 12px; height: 155px; }
.ltable { border-collapse: collapse; table-layout: fixed; width: 269px; }
.ltable th, .ltable td { height: 21px; padding: 0; border: solid #dcdcdc; border-width: 0 1px 1px 0; text-align: center; font-weight: 400; line-height: 18px; }
.ltable th:first-child { width: 143px; }
.ltable td:first-child { text-align: left; padding-left: 21px; }
.ltable td.l2:first-child { padding-left: 31px; }
.ltable td.l3:first-child { padding-left: 41px; background: linear-gradient(#dcdcdc, #dcdcdc) 18px 50% / 16px 1px no-repeat, linear-gradient(#dcdcdc, #dcdcdc) 18px 0 / 1px 100% no-repeat, linear-gradient(#dcdcdc, #dcdcdc) 8px 0 / 1px 100% no-repeat; }
.ltable input { appearance: none; display: block; position: relative; width: 14px; height: 14px; margin: 0 auto; border: 1px solid #8a8a8a; border-radius: 2px; background: #fff; }
.ltable input:checked { background: #2a7de1; border-color: #2a7de1; }
.ltable input:checked::after { content: ""; position: absolute; left: 4px; top: 1px; width: 4px; height: 8px; border: solid #fff; border-width: 0 2px 2px 0; transform: rotate(42deg); }
.ltable input:indeterminate { background: #94c7ff; box-shadow: inset 0 0 0 1px #fff, inset 0 0 0 2px #2a8cf0; }
.ltable input:disabled { background: #eee; border-color: #b4b4b4; }
.lfoot { display: flex; justify-content: flex-end; padding: 7px 8px 6px; }
.btn { min-width: 80px; height: 26px; padding: 1px 8px 0; border: 1px solid #c6c6ca; border-radius: 3px; background: #fff; }

.dialog { position: absolute; left: 560px; right: 255px; top: 32px; bottom: 87px; display: flex; flex-direction: column; padding: 0 12px; background: #fff; border: 1px solid #b4b4b8; box-shadow: 0 2px 14px 2px rgba(0, 0, 0, .75); }
.dtitle { display: flex; align-items: center; gap: 16px; height: 37px; flex: none; }
.dtitle h2 { flex: 1; margin-left: -1px; font-size: 14px; line-height: 20px; }
.dtitle svg { width: 12px; height: 12px; }
.dtabs { display: flex; align-items: flex-end; gap: 3px; height: 27px; flex: none; margin-left: -1px; }
.dtabs button:first-child { min-width: 62px; }
.dtabs button.on { height: 26px; padding: 0 5px; position: relative; z-index: 1; }
.dbody { flex: 1; min-height: 0; overflow: hidden; border: 2px solid #c3c3c8; margin: 0 -1px; }
.bars { border-collapse: collapse; table-layout: fixed; width: 754px; }
.bars th { height: 50px; padding: 1px 0 0; background: #efefef; font-weight: 400; line-height: 17px; border: solid #c6c6c6; border-width: 0 1px 1px 0; white-space: nowrap; }
.bars th:not(.code) { width: 81px; }
.bars td { height: 21px; padding: 0; line-height: 18px; text-align: center; border: solid #d4d4d4; border-width: 0 1px 1px 0; }
.bars td:first-child { background: #fffde4; }
.bars .dia { text-align: left; padding-left: 5px; }
.bars .dia svg { display: inline-block; width: 10px; height: 10px; margin-right: 1px; vertical-align: 1px; }
.dfoot { display: flex; gap: 6px; padding: 7px 0 10px; margin-left: -1px; flex: none; }
.dfoot .size { width: 9px; height: 9px; margin: auto -9px -8px auto; }

.status { display: flex; align-items: center; height: 31px; flex: none; background: #fbfbfb; }
.facts { display: grid; grid-template-columns: 90px 140px 110px 110px; padding-left: 2px; white-space: nowrap; }
.snap { display: flex; gap: 3px; }
.snap button { display: flex; align-items: center; justify-content: center; gap: 5px; width: 25px; height: 25px; border: 1px solid #aaa; border-radius: 3px; background: #fff; }
.snap .drop { width: 36px; }
.snap .apart { margin-left: 3px; }
.snap button.on { background: #dbe9fb; border-color: #2a7de1; }
.snap svg { width: 18px; height: 18px; }
.status p { display: flex; align-items: center; gap: 4px; margin-left: 16px; }
.status p svg { width: 15px; height: 15px; }

.taskbar { position: relative; display: flex; align-items: center; height: 40px; flex: none; border-top: 1px solid #2c4a63; background: linear-gradient(90deg, #1f5d90 0, #23689c 68px, #5caedb 80px, #62b3dd 450px, #3f9ed3 620px, #2f88c6 880px, #2878bf 1120px, #1d66ae 1440px, #17447a 1480px, #163f73 1860px, #12335e 100%); box-shadow: inset 0 1px rgba(255, 255, 255, .35); }
.swoosh { position: absolute; inset: 0; width: 100%; height: 100%; }
.orb { position: relative; margin-left: 9px; }
.orb svg { width: 36px; height: 36px; }
.dots { position: relative; width: 8px; height: 30px; margin-left: 13px; background: radial-gradient(circle at 1px 1px, #0d2c49 1px, transparent 1px) 0 0 / 3px 4px; }
.apps { position: relative; display: flex; gap: 4px; margin-left: 10px; }
.apps button { display: flex; align-items: center; justify-content: center; width: 58px; height: 38px; border: 1px solid #1f4d70; border-radius: 2px; background: linear-gradient(135deg, rgba(255, 255, 255, .45), rgba(255, 255, 255, .1) 60%, rgba(255, 255, 255, .25)); box-shadow: inset 0 0 0 1px rgba(255, 255, 255, .5); }
.apps button.on { background: linear-gradient(135deg, rgba(255, 255, 255, .85), rgba(255, 255, 255, .45)); }
.apps svg { width: 32px; height: 32px; }
.pre span { width: 32px; height: 32px; border-radius: 4px; background: #3d94f5; color: #fff; font-size: 24px; line-height: 31px; }
.tray { position: relative; display: flex; align-items: center; gap: 8px; height: 100%; margin-left: auto; color: #fff; }
.tray svg { width: 16px; height: 16px; }
.tray .dots { margin: 0; }
.tray .kbd { margin-right: -2px; }
.tray .pair { width: 8px; height: 22px; margin: 0 1px 0 2px; }
.tray time { display: flex; flex-direction: column; width: 79px; text-align: center; }
.peek { width: 14px; height: 100%; margin-left: 4px; border: 1px solid #0d2747; background: linear-gradient(90deg, #6b83a0, #2a4c75); }
```

FILE: tables.js
```js
const specs = {
  A: [[70, 1.737], [75, 1.75], [80, 1.763], [85, 1.777], [90, 1.791], [95, 1.806], [100, 1.822], [105, 1.837], [110, 1.853], [120, 1.886], [130, 1.92], [140, 1.956]],
  B: [[70, 1.959], [75, 1.971], [80, 1.985], [85, 1.999], [90, 2.013], [95, 2.028], [100, 2.043], [105, 2.059], [110, 2.075], [120, 2.108]]
};
const topDiameter = { A: 8, B: 10 };
const dia = (grade, d) => `<td class="dia"><svg viewBox="0 0 10 10"><use href="#${grade}"/></svg>${d}</td>`;

document.getElementById("bars").innerHTML = Object.entries(specs).flatMap(([series, rows]) =>
  rows.map(([h, w]) => `<tr><td>${series}${h}</td>${dia("hrb", topDiameter[series])}${dia("hrb", 8)}${dia("hpb", 6)}<td>${h}</td><td>80</td><td>200</td><td>0</td><td>(${w})</td></tr>`)
).join("");

// name, tree level, element state (1 on, 0 off, p partial), name column disabled
const layers = [
  ["所有构件", 1, "p"], ["施工段", 2, "p"], ["土方工程", 3, 0], ["基础工程", 3, 0], ["主体结构", 3, 1], ["二次结构", 3, 0],
  ["装饰装修", 3, 0], ["外墙工程", 3, 0], ["其它土建", 3, 0], ["钢筋工程", 3, 1], ["轴线", 2, 1, true], ["轴网", 3, 1, true],
  ["辅助轴线", 3, 1, true], ["柱", 2, "p"], ["柱", 3, 1], ["构造柱", 3, 1], ["砌体柱", 3, 0], ["约束边缘非阴影区", 3, 1],
  ["墙", 2, "p"], ["剪力墙", 3, 1], ["人防门框墙", 3, 1], ["砌体墙", 3, 1], ["砌体加筋", 3, 0], ["保温墙", 3, 1], ["暗梁", 3, 0],
  ["墙垛", 3, 0], ["幕墙", 3, 1], ["门窗洞", 2, "p"], ["门", 3, 0], ["窗", 3, 0], ["门联窗", 3, 0], ["墙洞", 3, 0],
  ["带形窗", 3, 1], ["带形洞", 3, 0]
];
const body = document.getElementById("layers");
body.innerHTML = layers.map(([name, level, state, off]) =>
  `<tr><td class="l${level}">${name}</td><td><input type="checkbox" aria-label="${name} 显示图元" ${state === 1 ? "checked" : ""} data-state="${state}"></td><td><input type="checkbox" aria-label="${name} 显示名称" ${off ? "disabled" : ""}></td></tr>`
).join("");
body.querySelectorAll('[data-state="p"]').forEach(box => { box.indeterminate = true; });
```
